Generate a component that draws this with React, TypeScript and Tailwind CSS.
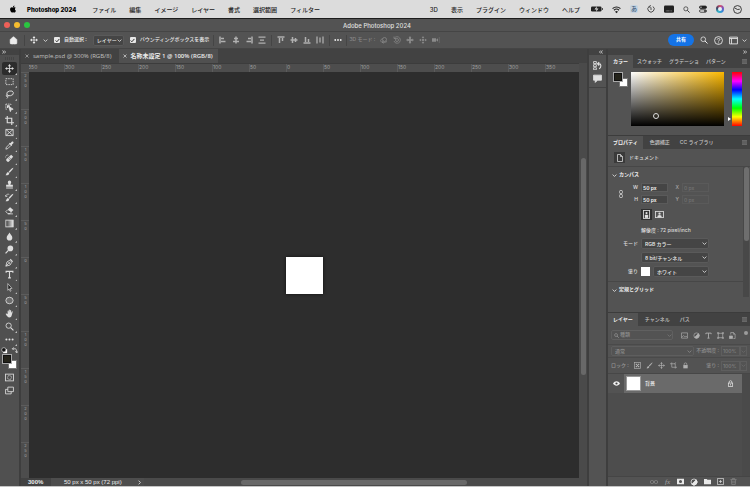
import { useState, type ReactNode } from "react";
import { Home } from "lucide-react";
import { FaApple } from "react-icons/fa";

const MENUS_LEFT = ["ファイル", "編集", "イメージ", "レイヤー", "書式", "選択範囲", "フィルター"];
const MENUS_RIGHT = ["3D", "表示", "プラグイン", "ウィンドウ", "ヘルプ"];
const RULER_X = [350, 300, 250, 200, 150, 100, 50, 0, 50, 100, 150, 200, 250, 300, 350];
const RULER_Y = [250, 200, 150, 100, 50, 0, 50, 100, 150, 200, 250];

function Icon({ children, className = "size-[10px]" }: { children: ReactNode; className?: string }) {
  return (
    <svg
      viewBox="0 0 16 16"
      className={`shrink-0 ${className}`}
      fill="none"
      stroke="currentColor"
      strokeWidth="1.5"
      aria-hidden="true"
    >
      {children}
    </svg>
  );
}

const movePaths = (
  <>
    <path d="M8 3v10M3 8h10" />
    <path d="M8 0l2.8 3.8H5.200zM8 16l2.800-3.800H5.200zM0 8l3.800-2.800v5.600zM16 8l-3.800-2.800v5.600z" fill="currentColor" stroke="none" />
  </>
);
const searchPaths = (
  <>
    <circle cx="6.500" cy="6.500" r="4.700" />
    <path d="M10 10l5 5" strokeWidth="2" />
  </>
);
const lockPaths = (
  <>
    <rect x="3" y="7" width="10" height="7.500" fill="currentColor" stroke="none" />
    <path d="M5 8V5a3 3 0 0 1 6 0v3" />
  </>
);
const brushPaths = (
  <>
    <path d="M14.800 1.200c.8.800-5.300 8.200-6.800 8.800L6.500 8.500C7 7 14 .4 14.800 1.200z" fill="currentColor" stroke="none" />
    <path d="M5.500 9l2 2c.2 3-3.500 4-6.500 3.500C3 13 2.500 9.500 5.500 9z" fill="currentColor" stroke="none" />
  </>
);
const adjustPaths = (
  <>
    <circle cx="8" cy="8" r="6" />
    <path d="M12.300 3.700A6 6 0 0 1 3.700 12.300z" fill="currentColor" />
  </>
);
const dotsPaths = (
  <>
    <circle cx="2.500" cy="8" r="1.800" fill="currentColor" stroke="none" />
    <circle cx="8" cy="8" r="1.800" fill="currentColor" stroke="none" />
    <circle cx="13.500" cy="8" r="1.800" fill="currentColor" stroke="none" />
  </>
);

const TOOLS: { name: string; icon: ReactNode }[] = [
  { name: "移動", icon: movePaths },
  { name: "長方形選択", icon: <rect x="1.500" y="3" width="13" height="10.500" strokeDasharray="2.600 1.600" /> },
  {
    name: "なげなわ",
    icon: (
      <>
        <ellipse cx="9" cy="6" rx="6" ry="4.200" transform="rotate(-14 9 6)" />
        <circle cx="4" cy="10.200" r="1.700" />
        <path d="M4.500 12c.5 1.500 0 2.500-1.500 3.300" />
      </>
    ),
  },
  {
    name: "オブジェクト選択",
    icon: (
      <>
        <path d="M6.500 6l8 5-3.300.7-1.700 3.600z" fill="currentColor" />
        <path d="M1.500 2h9v3M1.500 2v9h3" strokeDasharray="2.500 1.500" />
        <path d="M3.500 4h5v2.500h-3V9h-2z" fill="currentColor" stroke="none" />
      </>
    ),
  },
  { name: "切り抜き", icon: <path d="M4 0v12h12M0 4h12v12" strokeWidth="2" /> },
  {
    name: "フレーム",
    icon: <path d="M1.500 2.500h13v11h-13zM1.500 2.500l13 11M14.500 2.500l-13 11" />,
  },
  {
    name: "スポイト",
    icon: (
      <>
        <path d="M8.500 5l-6 6-1 3.500L5 13.500l6-6" />
        <path d="M7 4.500l1.500-1.200 1 .6L12 1.300c2-1.500 4.200.7 2.700 2.700l-2.600 2.500.6 1L11.500 9z" fill="currentColor" stroke="none" />
      </>
    ),
  },
  {
    name: "スポット修復ブラシ",
    icon: (
      <>
        <path d="M11 1.500l3.500 3.500L7 13.500C4.500 15.500.5 11.500 2.500 9z" fill="currentColor" stroke="none" />
        <path d="M7 5.500l3.500 3.500M5.500 7.500L9 11" stroke="#505050" strokeWidth="1" />
        <path d="M1 6a4 4 0 0 1 5-4" strokeDasharray="1.500 1.200" />
      </>
    ),
  },
  { name: "ブラシ", icon: brushPaths },
  {
    name: "コピースタンプ",
    icon: (
      <path
        d="M5 3.800a3 3 0 0 1 6 0C11 5.500 9.500 6.500 9.700 8.500H14V12H2V8.500h4.300C6.500 6.500 5 5.500 5 3.800zM2 13.300h12V15H2z"
        fill="currentColor"
        stroke="none"
      />
    ),
  },
  {
    name: "ヒストリーブラシ",
    icon: (
      <>
        {brushPaths}
        <path d="M1.500 6a4 4 0 0 1 6-3.500M.5 3.500l1 3 3-1" strokeWidth="1.200" />
      </>
    ),
  },
  {
    name: "消しゴム",
    icon: (
      <>
        <path d="M9 2l6 5-4 4-6.500-4.500z" fill="currentColor" stroke="none" />
        <path d="M4.500 7L1.500 10l3.500 3.500h4L11 11M5 14h9" />
      </>
    ),
  },
  {
    name: "グラデーション",
    icon: (
      <>
        <defs>
          <linearGradient id="tool-gradient">
            <stop offset="0" stopColor="#3a3a3a" />
            <stop offset="1" stopColor="#e6e6e6" />
          </linearGradient>
        </defs>
        <rect x="1.500" y="2" width="13" height="12" fill="url(#tool-gradient)" />
      </>
    ),
  },
  { name: "ぼかし", icon: <path d="M8 1c2 3.500 5 6 5 9a5 5 0 0 1-10 0c0-3 3-5.500 5-9z" fill="currentColor" stroke="none" /> },
  {
    name: "覆い焼き",
    icon: (
      <>
        <circle cx="9.500" cy="6" r="5" fill="currentColor" stroke="none" />
        <path d="M6 9.500L1 15" strokeWidth="2" />
      </>
    ),
  },
  {
    name: "ペン",
    icon: (
      <>
        <path d="M1.500 14.500L3.500 7l5-3 3.500 3.500-3 5zM1.500 14.500l5-5" />
        <circle cx="7.500" cy="8.700" r="1" />
        <path d="M10 1.500l4.500 4.500-1.800 1.300-4-4z" fill="currentColor" stroke="none" />
      </>
    ),
  },
  { name: "文字", icon: <path d="M2 5V2.500h12V5M8 2.500v11.500M5.500 14h5" strokeWidth="2" /> },
  { name: "パス選択", icon: <path d="M5 1l7.500 8.500-3.700.3 2 4.200-1.600.8-2-4.300L5 13z" fill="#222" strokeWidth="1.200" /> },
  { name: "楕円形", icon: <ellipse cx="8" cy="8" rx="6.500" ry="5.800" fill="#6d6d6d" /> },
  {
    name: "手のひら",
    icon: (
      <path
        d="M4.700 9V3.500c0-1.300 1.600-1.300 1.700 0L6.800 6.500V1.800c0-1.400 1.800-1.400 1.800 0v4.700l.6-4c.2-1.300 1.900-1 1.700.3L10.600 7l1.500-2.600c.7-1.100 2-.4 1.500.8L12 11c-.6 2.700-2 4-4.300 4-2.700 0-3.800-1.600-6.200-5.500-.6-1.200.7-1.900 1.600-1z"
        fill="currentColor"
        stroke="none"
      />
    ),
  },
  { name: "ズーム", icon: searchPaths },
  { name: "ツールバーを編集", icon: dotsPaths },
];

const ALIGN_ICONS: ReactNode[] = [
  <path d="M2 1v14M4 5h6M4 11h9" strokeWidth="3" />,
  <path d="M8 1v14M4 5h8M2 11h12" strokeWidth="3" />,
  <path d="M14 1v14M6 5h6M3 11h9" strokeWidth="3" />,
  <path d="M1 2h14M4 8h8M1 14h14" strokeWidth="2.500" />,
];
const DISTRIBUTE_ICONS: ReactNode[] = [
  <path d="M1 2h14M5 4v10M11 4v6" strokeWidth="3" />,
  <path d="M1 8h14M5 2v12M11 4v8" strokeWidth="3" />,
  <path d="M1 14h14M5 2v10M11 6v6" strokeWidth="3" />,
  <path d="M2 1v14M14 1v14M8 3v10" strokeWidth="2.500" />,
];
const MODE_3D_ICONS: ReactNode[] = [
  <>
    <circle cx="9" cy="7" r="4" />
    <path d="M5 5C1 7 0 10 3 12c3 1.500 8 1 11-1M7 10l-3 2 3 3" />
  </>,
  <>
    <circle cx="8" cy="8" r="3" />
    <path d="M3 4a6.500 6.500 0 1 1-1 6M2 1v4h4" />
  </>,
  <>
    {movePaths}
    <path d="M8 4l4 4-4 4-4-4z" fill="currentColor" />
  </>,
  <>
    <circle cx="8" cy="8" r="2" fill="currentColor" />
    <path d="M8 0l2.500 4h-5zM8 16l2.500-4h-5zM0 8l4-2.500v5zM16 8l-4-2.500v5z" fill="currentColor" stroke="none" />
  </>,
  <>
    <path d="M0 4.500h8v7H0zM8 8l4-3.500v7z" fill="currentColor" stroke="none" />
    <path d="M14.500 3v10" strokeDasharray="2 2" />
  </>,
];

function Chevron() {
  return (
    <Icon className="size-[5px]">
      <path d="M2 5l6 6 6-6" strokeWidth="2.500" />
    </Icon>
  );
}

function Select({ label, value, className = "", muted = false }: { label: string; value: string; className?: string; muted?: boolean }) {
  return (
    <span className={`grid items-center rounded-xs border ${muted ? "border-[#5e5e5e] text-[#8e8e8e]" : "border-[#5a5a5a] bg-[#454545] text-[#ececec]"} ${className}`}>
      <select aria-label={label} defaultValue={value} className="w-full appearance-none pl-[3px] leading-[8px] outline-none [grid-area:1/1]">
        <option>{value}</option>
      </select>
      <span className="pointer-events-none mr-px justify-self-end [grid-area:1/1]">
        <Chevron />
      </span>
    </span>
  );
}

function Checkbox({ label }: { label: string }) {
  const [checked, setChecked] = useState(true);
  return (
    <label className="flex items-center gap-[4px] whitespace-nowrap">
      <span className="grid place-items-center">
        <input
          type="checkbox"
          checked={checked}
          onChange={(e) => setChecked(e.target.checked)}
          className="size-[6px] appearance-none rounded-[1px] bg-[#e8e8e8] [grid-area:1/1]"
        />
        {checked && (
          <span className="pointer-events-none text-[#222] [grid-area:1/1]">
            <Icon className="size-[5px]">
              <path d="M2 8l4 4 8-9" strokeWidth="3" />
            </Icon>
          </span>
        )}
      </span>
      {label}
    </label>
  );
}

function Divider() {
  return <span className="h-[11px] w-px shrink-0 bg-[#454545]" />;
}

function PanelTabs({ tabs, wide = false }: { tabs: string[]; wide?: boolean }) {
  return (
    <div className={`flex h-[13px] shrink-0 items-stretch bg-[#424242] ${wide ? "gap-[10px]" : "gap-[7px]"}`}>
      {tabs.map((tab, i) => (
        <button
          key={tab}
          className={`whitespace-nowrap ${i === 0 ? "-mr-[3px] bg-[#535353] px-[5px] font-bold text-[#f4f4f4]" : "text-[#c6c6c6]"}`}
        >
          {tab}
        </button>
      ))}
      <button aria-label="パネルメニュー" className="mr-[3px] ml-auto text-[#a0a0a0]">
        <Icon className="size-[5px]">
          <path d="M0 2h16M0 6h16M0 10h16M0 14h16" />
        </Icon>
      </button>
    </div>
  );
}

function Swatches() {
  return (
    <div className="grid size-[15px] shrink-0">
      <span className="size-[9px] self-end justify-self-end border border-[#777] bg-white [grid-area:1/1]" />
      <span className="z-10 size-[10px] border border-[#a8a8a8] bg-[#24231a] outline -outline-offset-2 outline-[#111] [grid-area:1/1]" />
    </div>
  );
}

function MenuBar() {
  return (
    <nav className="flex h-[19px] shrink-0 items-center gap-[13px] border-b border-[#1c1c1c] bg-[#dcdcdc] pr-[8px] pl-[9px] text-[6px] text-[#222]">
      <FaApple className="size-[8px] text-black" aria-hidden="true" />
      <button className="mr-[3px] -ml-[3px] font-extrabold whitespace-nowrap text-black">Photoshop 2024</button>
      {MENUS_LEFT.map((menu) => (
        <button key={menu} className="whitespace-nowrap">
          {menu}
        </button>
      ))}
      <span className="flex-1" />
      {MENUS_RIGHT.map((menu) => (
        <button key={menu} className="whitespace-nowrap">
          {menu}
        </button>
      ))}
      <div className="-ml-[2px] flex items-center gap-[9px]">
        <svg viewBox="0 0 24 12" className="h-[6px] w-[12px]" aria-hidden="true">
          <rect x="0" y="1" width="21" height="10" rx="2.500" fill="#222" />
          <path d="M22 4v4l2-1V5z" fill="#222" />
          <path d="M12 0L7 7h4l-1 5 5-7h-4z" fill="#ddd" />
        </svg>
        <Icon className="size-[9px]">
          <path d="M1 6.500a10 10 0 0 1 14 0M3.500 9.300a6.500 6.500 0 0 1 9 0" strokeWidth="2" />
          <path d="M8 14.500L5.300 11.800a4 4 0 0 1 5.400 0z" fill="currentColor" stroke="none" />
        </Icon>
        <span className="rounded-xs bg-[#c6d3e0] px-px leading-[8px] text-[#3a5878]">あ</span>
        <Icon className="size-[8px]">
          <path d="M4 3a6.300 6.300 0 1 0 8 0M8 5v5M8 1l-4 2 3 3" />
        </Icon>
        <Icon className="size-[10px]">
          <rect x="0" y="2.500" width="16" height="11.500" rx="2" fill="currentColor" stroke="none" />
          <path d="M3 11h10" stroke="#aaa" strokeDasharray="1 1" />
        </Icon>
        <Icon className="size-[7px]">{searchPaths}</Icon>
        <Icon className="size-[8px]">
          <rect x="1" y="2" width="14" height="5" rx="2.500" fill="currentColor" />
          <rect x="1" y="9.500" width="14" height="5" rx="2.500" />
          <circle cx="4" cy="4.500" r="1.300" fill="#ddd" stroke="none" />
          <circle cx="12" cy="12" r="1.800" fill="currentColor" stroke="none" />
        </Icon>
        <span className="grid size-[8px] place-items-center rounded-full bg-[conic-gradient(#d8506a,#7a4fc0,#2f8fd8,#35b7c9,#3a3f60,#d8506a)]">
          <span className="size-[4px] rounded-full bg-[#e4f0f4]" />
        </span>
        <Icon className="size-[9px]">
          <circle cx="8" cy="8" r="7" />
          <path d="M3.500 5.500L8 8l4-.5" />
        </Icon>
      </div>
    </nav>
  );
}

function OptionsBar() {
  return (
    <div className="flex h-[18px] shrink-0 items-center border-y border-[#454545] px-[3px] text-[#ececec]">
      <button aria-label="ホーム" className="px-[6px]">
        <Home className="size-[9px]" fill="currentColor" strokeWidth={1.500} />
      </button>
      <Divider />
      <div className="flex items-center gap-[5px] pr-[6px] pl-[5px]">
        <Icon className="size-[8px]">{movePaths}</Icon>
        <Chevron />
      </div>
      <div className="flex items-center gap-[6px]">
        <Checkbox label="自動選択 :" />
        <Select label="自動選択の対象" value="レイヤー" className="h-[11px] w-[31px]" />
        <Checkbox label="バウンディングボックスを表示" />
      </div>
      <div className="flex items-center gap-[5px] pl-[4px] text-[#b0b0b0]">
        <Divider />
        {ALIGN_ICONS.map((icon, i) => (
          <button key={i} aria-label={`整列 ${i + 1}`}>
            <Icon className="size-[8px]">{icon}</Icon>
          </button>
        ))}
        <Divider />
        {DISTRIBUTE_ICONS.map((icon, i) => (
          <button key={i} aria-label={`分布 ${i + 1}`}>
            <Icon className="size-[8px]">{icon}</Icon>
          </button>
        ))}
        <Divider />
      </div>
      <button aria-label="その他" className="px-[4px]">
        <Icon className="size-[8px]">{dotsPaths}</Icon>
      </button>
      <Divider />
      <div className="flex items-center gap-[5px] pl-[2px] text-[#8a8a8a]">
        <span className="whitespace-nowrap">3D モード :</span>
        {MODE_3D_ICONS.map((icon, i) => (
          <button key={i} aria-label={`3D モード ${i + 1}`}>
            <Icon className="size-[8px]">{icon}</Icon>
          </button>
        ))}
      </div>
      <div className="ml-auto flex items-center gap-[6px]">
        <button className="h-[12px] w-[26px] rounded-full bg-[#1473e6] font-bold text-white">共有</button>
        <button aria-label="検索">
          <Icon className="size-[8px]">{searchPaths}</Icon>
        </button>
        <button aria-label="ヘルプ">
          <Icon className="size-[9px]">
            <circle cx="8" cy="8" r="7" />
            <path d="M5.800 6.500c0-3 4.600-2.800 4.600-.3 0 1.500-2.400 1.600-2.400 3.600M8 11.500V13" />
          </Icon>
        </button>
        <button aria-label="ワークスペース" className="flex items-center gap-[4px]">
          <Icon className="size-[9px]">
            <path d="M1 2h14v12H1zM1 4.500h14M4.500 4.500V14" />
          </Icon>
          <Chevron />
        </button>
      </div>
    </div>
  );
}

function Toolbar() {
  const [active, setActive] = useState("移動");
  return (
    <aside className="flex w-[21px] shrink-0 flex-col border-r-2 border-[#3e3e3e] bg-[#505050] text-[#dedede]">
      <div className="flex h-[6px] shrink-0 items-center bg-[#424242] pl-[2px]">
        <Icon className="size-[4px]">
          <path d="M2 2l5 6-5 6M9 2l5 6-5 6" strokeWidth="3" />
        </Icon>
      </div>
      <div className="mx-auto mt-[2px] h-[3px] w-[10px] shrink-0 bg-[repeating-linear-gradient(90deg,#454545_0_1px,#505050_1px_2px)]" />
      <div className="mt-[2px] flex h-[284px] shrink-0 flex-col">
        {TOOLS.map((tool) => (
          <button
            key={tool.name}
            aria-label={tool.name}
            onClick={() => setActive(tool.name)}
            className={`mx-[2px] grid flex-1 place-items-center rounded-xs ${active === tool.name ? "bg-[#2c2c2c]" : ""}`}
          >
            <span className="[grid-area:1/1]">
              <Icon className="size-[9px]">{tool.icon}</Icon>
            </span>
            <span className="size-[2px] self-end justify-self-end bg-[#c0c0c0] [clip-path:polygon(100%_0,100%_100%,0_100%)] [grid-area:1/1]" />
          </button>
        ))}
      </div>
      <div className="flex shrink-0 items-center justify-between px-[1px] pt-[1px]">
        <button aria-label="初期設定の描画色と背景色">
          <Icon className="size-[7px]">
            <rect x="5" y="5" width="9" height="9" fill="#fff" stroke="none" />
            <circle cx="6.500" cy="6.500" r="5" fill="#111" />
          </Icon>
        </button>
        <button aria-label="描画色と背景色を入れ替え">
          <Icon className="size-[7px]">
            <path d="M4 4h4c4 0 5 2 5 8M6 1L3 4l3 3M10 10l3 3.500 3-3.500" strokeWidth="2" />
          </Icon>
        </button>
      </div>
      <div className="flex shrink-0 flex-col items-center gap-[4px]">
        <Swatches />
        <button aria-label="クイックマスクモード">
          <Icon className="size-[9px]">
            <rect x="1" y="2" width="14" height="12" />
            <circle cx="8" cy="8" r="3.500" strokeDasharray="1.500 1" />
          </Icon>
        </button>
        <button aria-label="スクリーンモード">
          <Icon className="size-[9px]">
            <path d="M5 2h10v8H5zM5 6H1v8h10v-4" />
          </Icon>
        </button>
      </div>
    </aside>
  );
}

function DocumentArea() {
  return (
    <main className="flex min-w-0 flex-1 flex-col bg-[#424242]">
      <div className="flex h-[14px] shrink-0 text-[6px] text-[#c0c0c0]">
        {["sample.psd @ 300% (RGB/8)", "名称未設定 1 @ 100% (RGB/8)"].map((name, i) => (
          <button
            key={name}
            className={`flex items-center gap-[4px] pl-[4px] font-["Open_Sans","Noto_Sans_CJK_JP",sans-serif] whitespace-nowrap ${i === 1 ? "bg-[#505050] pr-[5px] font-semibold text-[#ececec]" : "pr-[7px]"}`}
          >
            <Icon className="size-[4px]">
              <path d="M2 2l12 12M14 2L2 14" strokeWidth="2.500" />
            </Icon>
            {name}
          </button>
        ))}
      </div>
      <div className="flex min-h-0 flex-1">
        <div className="flex min-w-0 flex-1 flex-col">
          <div className="flex h-[9px] shrink-0 border-t border-[#3c3c3c] bg-[#4d4d4d] pl-[8px] text-[5px] leading-[7px] font-normal text-[#a0a0a0]">
            <div className="flex min-w-0 flex-1 overflow-hidden">
              {RULER_X.map((n, i) => (
                <span
                  key={i}
                  className={`w-[37px] shrink-0 border-l border-[#5c5c5c] ${i === 0 ? "-ml-[2px]" : ""}`}
                >
                  {n}
                </span>
              ))}
            </div>
          </div>
          <div className="flex min-h-0 flex-1">
            <div className="w-[8px] shrink-0 overflow-hidden bg-[#4d4d4d] text-[4px] leading-[8px] font-normal text-[#a0a0a0]">
              {RULER_Y.map((n, i) => (
                <div key={i} className="h-[37px] border-t border-[#5c5c5c] [text-orientation:upright] [writing-mode:vertical-rl]">
                  {n}
                </div>
              ))}
            </div>
            <div className="flex flex-1 items-center justify-center bg-[#2d2d2d]">
              <div className="size-[37px] bg-white shadow-[0_0_3px_#111]" />
            </div>
          </div>
        </div>
        <div className="flex w-[8px] shrink-0 flex-col items-center bg-[#4a4a4a]">
          <div className="h-[95px] shrink" />
          <div className="h-[217px] w-[5px] rounded-full bg-[#686868]" />
        </div>
      </div>
      <div className='flex h-[8px] shrink-0 items-center font-["Liberation_Sans",sans-serif] text-[6px] leading-[8px] text-[#ececec]'>
        <span className="w-[30px] pl-[7px] font-bold">300%</span>
        <div className="flex w-[93px] items-center justify-between bg-[#4d4d4d] pr-[2px] pl-[13px] whitespace-nowrap">
          50 px x 50 px (72 ppi)
          <Icon className="size-[5px]">
            <path d="M5 2l6 6-6 6" strokeWidth="2.500" />
          </Icon>
        </div>
        <div className="flex h-full flex-1 items-center bg-[#4a4a4a]">
          <span className="w-[22%]" />
          <span className="h-[5px] w-[51%] rounded-full bg-[#686868]" />
        </div>
      </div>
    </main>
  );
}

function ColorPanel() {
  return (
    <section className="shrink-0">
      <PanelTabs tabs={["カラー", "スウォッチ", "グラデーショ", "パターン"]} />
      <div className="flex h-[67px] gap-[3px] pt-[4px] pr-[8px] pb-[9px] pl-[5px]">
        <Swatches />
        <div className="relative flex-1 bg-[linear-gradient(to_top,#000,transparent),linear-gradient(to_right,#fff,#fbb800)]">
          <span className="absolute top-[82%] left-[27%] size-[6px] -translate-1/2 rounded-full border border-[#ddd]" />
        </div>
        <div className="flex w-[15px] justify-end gap-px">
          <span className="mt-[45px] size-0 border-y-2 border-l-3 border-y-transparent border-l-white" />
          <span className="w-[10px] bg-[linear-gradient(to_bottom,#f00,#f0f_17%,#00f_33%,#0ff_50%,#0f0_67%,#ff0_83%,#f00)]" />
        </div>
      </div>
    </section>
  );
}

function NumberField({ id, label, value, disabled = false }: { id: string; label: string; value: string; disabled?: boolean }) {
  return (
    <div className={`flex items-center gap-[3px] ${disabled ? "text-[#a8a8a8]" : ""}`}>
      <label htmlFor={id} className="w-[5px] text-right">
        {label}
      </label>
      <input
        id={id}
        defaultValue={value}
        disabled={disabled}
        className={`h-[9px] w-[27px] border border-[#5a5a5a] px-px outline-none ${disabled ? "text-[#747474]" : "bg-[#454545] font-semibold text-[#f2f2f2]"}`}
      />
    </div>
  );
}

function SectionTitle({ children }: { children: ReactNode }) {
  return (
    <h2 className="flex h-[16px] items-center gap-[2px] pl-[4px] font-bold text-[#f0f0f0]">
      <Chevron />
      {children}
    </h2>
  );
}

function PropertiesPanel() {
  return (
    <section className="shrink-0 border-t border-[#3c3c3c]">
      <PanelTabs tabs={["プロパティ", "色調補正", "CC ライブラリ"]} wide />
      <div className="flex h-[18px] items-center gap-[4px] border-b border-[#474747] pl-[6px]">
        <span className="grid size-[11px] place-items-center bg-[#3a3a3a]">
          <Icon className="size-[8px]">
            <path d="M3 1h6l4 4v10H3zM9 1v4h4" />
          </Icon>
        </span>
        ドキュメント
      </div>
      <div className="flex h-[145px]">
        <div className="flex-1">
          <SectionTitle>カンパス</SectionTitle>
          <div className="flex items-center">
            <span className="flex w-[25px] justify-center">
              <Icon className="size-[8px]">
                <rect x="5" y="0.500" width="6" height="7" rx="3" />
                <rect x="5" y="8.500" width="6" height="7" rx="3" />
              </Icon>
            </span>
            <div className="grid grid-cols-[auto_auto] gap-x-[6px] gap-y-[3px]">
              <NumberField id="canvas-w" label="W" value="50 px" />
              <NumberField id="canvas-x" label="X" value="0 px" disabled />
              <NumberField id="canvas-h" label="H" value="50 px" />
              <NumberField id="canvas-y" label="Y" value="0 px" disabled />
            </div>
          </div>
          <div className="mt-[5px] ml-[33px] flex items-center gap-[2px]">
            <button aria-label="縦置き" className="grid size-[11px] place-items-center bg-[#2f2f2f]">
              <Icon className="size-[9px]">
                <rect x="2.500" y="1" width="11" height="14" />
                <circle cx="8" cy="5.500" r="2" fill="currentColor" stroke="none" />
                <path d="M5 14V8.500h6V14z" fill="currentColor" stroke="none" />
              </Icon>
            </button>
            <button aria-label="横置き" className="grid size-[11px] place-items-center">
              <Icon className="size-[9px]">
                <rect x="1" y="2.500" width="14" height="11" />
                <circle cx="8" cy="6.500" r="2" fill="currentColor" stroke="none" />
                <path d="M4 13a4 4 0 0 1 8 0z" fill="currentColor" stroke="none" />
              </Icon>
            </button>
          </div>
          <p className="mt-[6px] ml-[33px] leading-[8px]">解像度 : 72 pixel/inch</p>
          <div className="mt-[4px] grid grid-cols-[30px_68px] items-center gap-x-[3px] gap-y-[3px]">
            <span className="text-right">モード</span>
            <Select label="モード" value="RGB カラー" className="h-[11px]" />
            <Select label="ビット数" value="8 bit/チャンネル" className="col-start-2 h-[11px]" />
            <span className="text-right">塗り</span>
            <div className="flex items-center gap-[3px]">
              <span className="size-[9px] bg-white" />
              <Select label="塗り" value="ホワイト" className="h-[11px] flex-1" />
            </div>
          </div>
          <div className="mt-[4px] border-t border-[#474747]">
            <SectionTitle>定規とグリッド</SectionTitle>
          </div>
        </div>
        <div className="mr-px mb-[15px] w-[6px] bg-[#484848]">
          <div className="ml-px h-[74px] rounded-full bg-[#6e6e6e]" />
        </div>
      </div>
    </section>
  );
}

function LayersPanel() {
  return (
    <section className="flex min-h-0 flex-1 flex-col border-t border-[#3c3c3c]">
      <PanelTabs tabs={["レイヤー", "チャンネル", "パス"]} wide />
      <div className="flex h-[18px] shrink-0 items-center pr-px pl-[3px] text-[#b0b0b0]">
        <div className="flex h-[10px] w-[62px] items-center rounded-xs border border-[#606060] pl-[2px]">
          <Icon className="size-[5px]">{searchPaths}</Icon>
          <select aria-label="フィルターの種類" className="flex-1 appearance-none pl-px text-[#8e8e8e] outline-none">
            <option>種類</option>
          </select>
          <span className="text-[#7a7a7a]">
            <Chevron />
          </span>
        </div>
        <div className="flex flex-1 items-center gap-[5px] pl-[8px]">
          <Icon className="size-[7px]">
            <path d="M1 2h14v12H1zM2 12l4-4 3 3 2-2 3 3" />
          </Icon>
          <Icon className="size-[7px]">{adjustPaths}</Icon>
          <Icon className="size-[7px]">
            <path d="M2 5V2.500h12V5M8 2.500v11.500M5.500 14h5" strokeWidth="2" />
          </Icon>
          <Icon className="size-[7px]">
            <path d="M3 3h10v10H3zM1 1h3v3H1zM12 1h3v3h-3zM1 12h3v3H1zM12 12h3v3h-3z" />
          </Icon>
          <Icon className="size-[7px]">
            <path d="M4 6V1h6l4 4v10h-4M10 1v4h4" />
            <path d="M1 9h7v6H1z" fill="currentColor" />
          </Icon>
          <span className="mr-px mb-[4px] ml-auto size-[4px] rounded-full bg-[#9c9c9c]" />
        </div>
      </div>
      <div className="flex h-[14px] shrink-0 items-center border-y border-[#4a4a4a] pr-[3px] pl-[3px] text-[#8e8e8e]">
        <Select label="描画モード" value="通常" className="h-[10px] flex-1" muted />
        <label htmlFor="opacity" className="pl-[2px] whitespace-nowrap">
          不透明度 :
        </label>
        <input id="opacity" defaultValue="100%" disabled className="ml-[2px] h-[10px] w-[19px] border border-[#5e5e5e] px-px text-[#808080]" />
        <span className="grid h-[10px] w-[7px] place-items-center border border-[#5e5e5e] text-[#6c6c6c]">
          <Chevron />
        </span>
      </div>
      <div className="flex h-[15px] shrink-0 items-center gap-[5px] pr-[3px] pl-[3px] text-[#b0b0b0]">
        <span className="whitespace-nowrap text-[#9a9a9a]">ロック :</span>
        <Icon className="size-[7px]">
          <rect x="1" y="1" width="14" height="14" />
          <path d="M4 4h3v3H4zM9 4h3v3H9zM4 9h3v3H4zM9 9h3v3H9zM6.500 6.500h3v3h-3z" fill="currentColor" stroke="none" />
        </Icon>
        <Icon className="size-[7px]">{brushPaths}</Icon>
        <Icon className="size-[7px]">{movePaths}</Icon>
        <Icon className="size-[7px]">
          <path d="M0 4h12v11M4 1v11h12M10 4l4-3" />
        </Icon>
        <Icon className="size-[7px]">{lockPaths}</Icon>
        <div className="ml-auto flex items-center text-[#8e8e8e]">
          <label htmlFor="fill" className="whitespace-nowrap">
            塗り :
          </label>
          <input id="fill" defaultValue="100%" disabled className="ml-[2px] h-[10px] w-[19px] border border-[#5e5e5e] px-px text-[#808080]" />
          <span className="grid h-[10px] w-[7px] place-items-center border border-[#5e5e5e] text-[#6c6c6c]">
            <Chevron />
          </span>
        </div>
      </div>
      <div className="flex min-h-0 flex-1 border-t border-[#474747] bg-[#4d4d4d]">
        <div className="flex-1">
          <div className="flex h-[19px] items-center text-[#f0f0f0]">
            <button aria-label="レイヤーの表示" className="grid h-full w-[16px] place-items-center bg-[#535353]">
              <Icon className="size-[7px]">
                <path d="M0 8c4-6.500 12-6.500 16 0-4 6.500-12 6.500-16 0z" fill="currentColor" stroke="none" />
                <circle cx="8" cy="8" r="2.500" fill="#444" stroke="none" />
              </Icon>
            </button>
            <button className="flex h-full flex-1 items-center bg-[#6a6a6a] pr-[8px] pl-[2px]">
              <span className="mr-[4px] size-[15px] border border-[#999] bg-white" />
              背景
              <span className="ml-auto">
                <Icon className="size-[7px]">
                  <rect x="3" y="7" width="10" height="7.500" />
                  <path d="M5 7V4.500a3 3 0 0 1 6 0V7M8 9v3.500" />
                </Icon>
              </span>
            </button>
          </div>
        </div>
        <div className="w-[8px] bg-[#4a4a4a]" />
      </div>
      <div className="flex h-[10px] shrink-0 items-center justify-end gap-[6px] border-t border-[#454545] pr-[13px] text-[#e8e8e8]">
        <span className="text-[#8c8c8c]">
          <Icon className="size-[8px]">
            <rect x="0.500" y="5" width="7" height="6" rx="3" />
            <rect x="8.500" y="5" width="7" height="6" rx="3" />
          </Icon>
        </span>
        <button className='w-[7px] font-["Liberation_Serif",serif] text-[7px] leading-[8px] text-[#a8a8a8] italic'>fx</button>
        <Icon className="size-[7px]">
          <path d="M0 1.500h16v13H0zM8 4.500a3.500 3.500 0 1 0 0 7 3.500 3.500 0 1 0 0-7z" fill="currentColor" fillRule="evenodd" stroke="none" />
        </Icon>
        <Icon className="size-[8px]">{adjustPaths}</Icon>
        <Icon className="size-[7px]">
          <path d="M0 2h6l2 2h8v10H0z" fill="currentColor" stroke="none" />
        </Icon>
        <Icon className="size-[7px]">
          <path d="M1 1h14v14H1zM8 4.500v7M4.500 8h7" />
        </Icon>
        <span className="text-[#8c8c8c]">
          <Icon className="size-[7px]">
            <path d="M1 3.500h14M5.500 3V1h5v2M3 4l1 11h8l1-11M6.500 6v6M9.500 6v6" />
          </Icon>
        </span>
      </div>
    </section>
  );
}

export default function App() {
  return (
    <div className='flex h-screen flex-col overflow-hidden border-b border-[#c4c4c4] bg-[#535353] font-["Inter","Noto_Sans_CJK_JP",sans-serif] text-[5px] font-medium text-[#dedede]'>
      <MenuBar />
      <header className="grid h-[12px] shrink-0 grid-cols-[1fr_auto_1fr] items-center pl-[4px]">
        <div className="flex gap-[4px]">
          <button aria-label="閉じる" className="size-[6px] rounded-full bg-[#ee6058]" />
          <button aria-label="しまう" className="size-[6px] rounded-full bg-[#f5bd2f]" />
          <button aria-label="拡大" className="size-[6px] rounded-full bg-[#2ac440]" />
        </div>
        <h1 className="text-[6px] text-[#e0e0e0]">Adobe Photoshop 2024</h1>
      </header>
      <OptionsBar />
      <div className="flex min-h-0 flex-1">
        <Toolbar />
        <DocumentArea />
        <aside className="flex w-[21px] shrink-0 flex-col border-x-2 border-[#3e3e3e] text-[#e0e0e0]">
          <div className="flex h-[6px] shrink-0 items-center justify-end bg-[#424242] pr-[3px]">
            <Icon className="size-[4px]">
              <path d="M7 2L2 8l5 6M14 2L9 8l5 6" strokeWidth="3" />
            </Icon>
          </div>
          <div className="flex flex-col items-center gap-[4px] border-b border-[#424242] pt-[6px] pb-[4px]">
            <button aria-label="ヒストリー">
              <Icon className="size-[9px]">
                <path d="M1 1h5v3.500H1zM1 6.500h5V10H1zM1 12h5v3.500H1z" />
                <path d="M8 5h3c4 0 4 6 0 9M11 2L8 5l3 3" strokeWidth="2" />
              </Icon>
            </button>
            <button aria-label="コメント">
              <Icon className="size-[9px]">
                <path d="M1 2h14v9H8l-4 4v-4H1z" fill="currentColor" />
              </Icon>
            </button>
          </div>
        </aside>
        <div className="flex w-[142px] shrink-0 flex-col">
          <div className="flex h-[6px] shrink-0 items-center justify-end bg-[#424242] pr-[3px]">
            <Icon className="size-[4px]">
              <path d="M2 2l5 6-5 6M9 2l5 6-5 6" strokeWidth="3" />
            </Icon>
          </div>
          <ColorPanel />
          <PropertiesPanel />
          <LayersPanel />
        </div>
      </div>
    </div>
  );
}
